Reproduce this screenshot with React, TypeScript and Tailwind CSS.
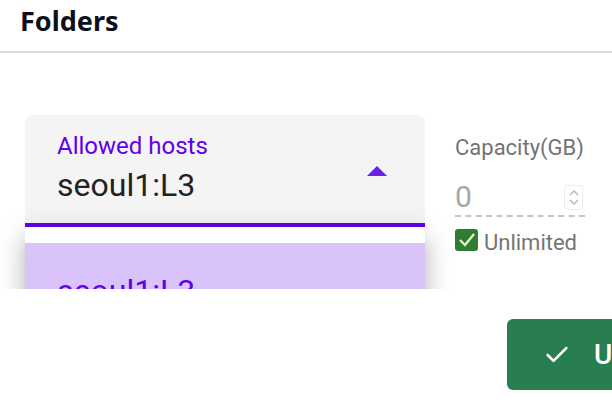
import React from 'react';
import { Check } from 'lucide-react';

const font = { fontFamily: 'Roboto, "Liberation Sans", sans-serif' };

const HostSelect = () => {
  return (
    <div className="relative w-[400px]">
      <div className="relative h-[112px] rounded-t-[8px] bg-[#f4f4f4] border-b-4 border-[#6200ea] pl-[32px] pt-[19px]">
        <div className="text-[24px] leading-[24px] text-[#6200ea]">Allowed hosts</div>
        <div className="mt-[11px] text-[32px] leading-[32px] text-[#222]">seoul1:L3</div>
        <svg className="absolute right-[38px] top-[51px]" width="20" height="10" viewBox="0 0 20 10">
          <polygon points="0,10 10,0 20,10" fill="#6c1fe6" />
        </svg>
      </div>
      {/* open dropdown menu */}
      <div className="absolute left-0 top-[112px] z-10 w-full h-[200px] rounded-t-[8px] bg-white pt-[16px] shadow-[0_10px_10px_-6px_rgba(0,0,0,0.2),0_16px_20px_2px_rgba(0,0,0,0.14),0_6px_28px_4px_rgba(0,0,0,0.12)]">
        <div className="h-[120px] bg-[#dac2fa] pl-[32px] pt-[32px] text-[32px] leading-[32px] text-[#6200ea]">
          seoul1:L3
        </div>
      </div>
    </div>
  );
};

const CapacityField = () => {
  return (
    <div className="w-[130px] pt-[22px]">
      <div className="text-[22px] leading-[22px] text-[#737373] whitespace-nowrap">Capacity(GB)</div>
      <div className="mt-[23px] flex items-center justify-between border-b-2 border-dashed border-[#c4c4c4] pb-[3px]">
        <span className="text-[30px] leading-[30px] text-[#a3a8ab]">0</span>
        <div className="mr-[2px] flex h-[25px] w-[19px] flex-col items-center justify-center rounded-[4px] border border-[#ececec]">
          <svg width="10" height="6" viewBox="0 0 10 6" className="mb-[3px]">
            <polyline points="1,5 5,1 9,5" fill="none" stroke="#b8b8b8" strokeWidth="1.5" />
          </svg>
          <svg width="10" height="6" viewBox="0 0 10 6">
            <polyline points="1,1 5,5 9,1" fill="none" stroke="#b8b8b8" strokeWidth="1.5" />
          </svg>
        </div>
      </div>
      <label className="mt-[9px] flex items-center gap-[6px]">
        <span className="flex h-[22px] w-[23px] items-center justify-center rounded-[3px] bg-[#2e7d32]">
          <svg width="18" height="16" viewBox="0 0 18 16">
            <polyline points="2,8 7,13 16,2" fill="none" stroke="#eef5c4" strokeWidth="2.2" />
          </svg>
        </span>
        <span className="pt-[6px] text-[22px] leading-[22px] text-[#757575]">Unlimited</span>
      </label>
    </div>
  );
};

export default function App() {
  return (
    <div className="relative h-[420px] w-[612px] overflow-hidden bg-white" style={font}>
      <header className="h-[53px] border-b-2 border-[#dcdcdc] pl-[20px] pt-[3px]">
        <h1 className="text-[27px] font-bold leading-[36px] text-[#0d0f1a]" style={{ fontFamily: '"Noto Sans", "DejaVu Sans", sans-serif' }}>
          Folders
        </h1>
      </header>

      <div className="h-[236px] overflow-hidden">
        <div className="flex items-start gap-[30px] pl-[25px] pt-[62px]">
          <HostSelect />
          <CapacityField />
        </div>
      </div>

      <div className="flex justify-start pl-[507px] pt-[30px]">
        <button className="flex h-[71px] w-[200px] shrink-0 items-center gap-[23px] rounded-[6px] bg-[#287e4f] pl-[36px] text-[28px] font-medium text-white">
          <Check className="h-[28px] w-[28px]" strokeWidth={2.2} />
          Update
        </button>
      </div>
    </div>
  );
}
